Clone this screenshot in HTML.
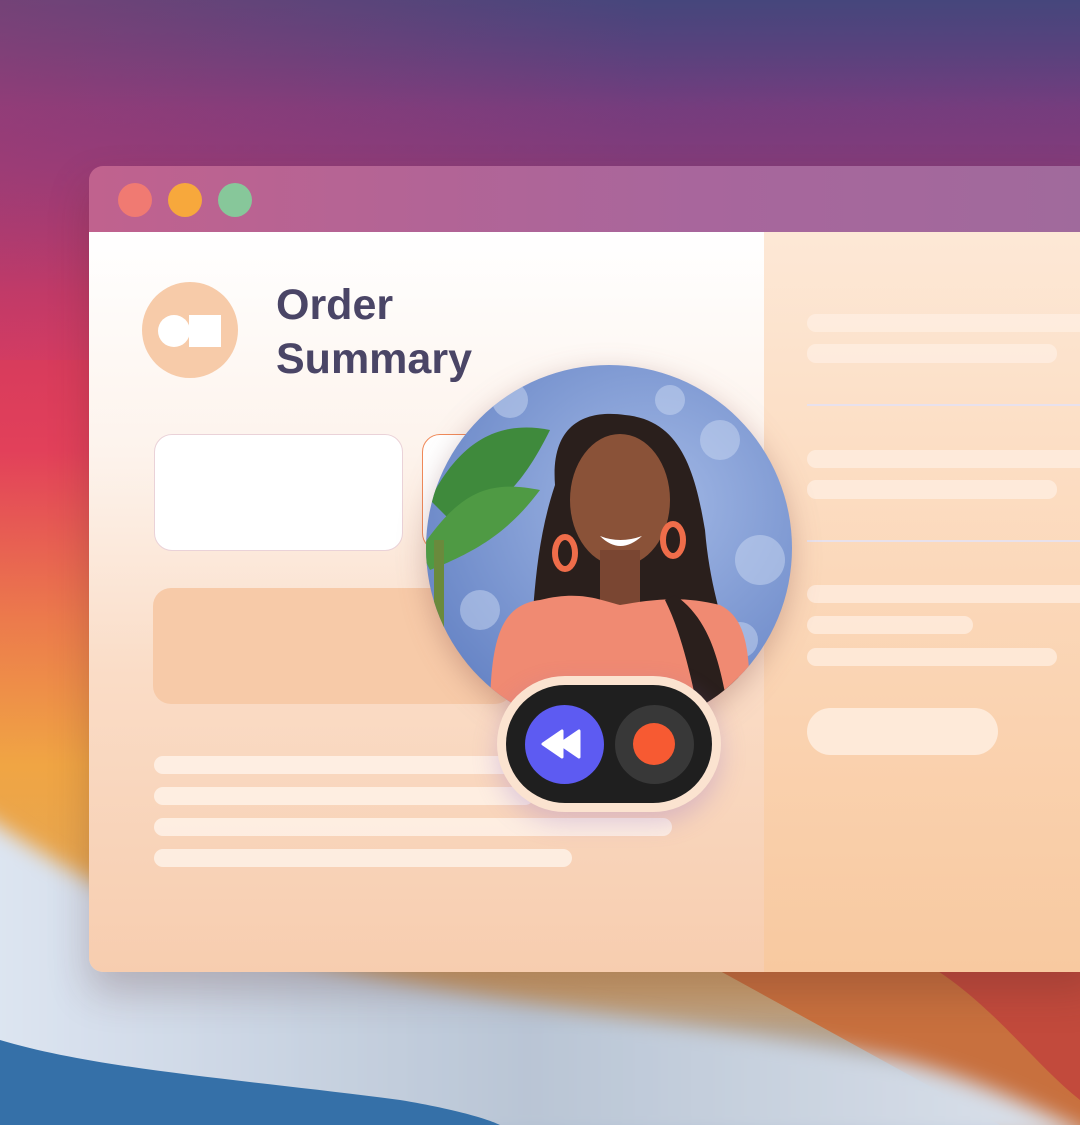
<!DOCTYPE html>
<html><head><style>
*{margin:0;padding:0;box-sizing:border-box}
body{width:1080px;height:1125px;overflow:hidden;position:relative;font-family:"Liberation Sans",sans-serif;
background:linear-gradient(180deg,#5a437e 0%,#9a3c74 14%,#d0385e 26%,#e2405a 40%,#ec7a4c 55%,#f0a544 68%,#e6a650 78%,#c9a070 88%,#8aa0c0 100%);}
.abs{position:absolute}
</style></head><body>
<div class="abs" style="left:0;top:0;width:1080px;height:360px;background:linear-gradient(180deg,rgba(70,70,124,1) 0%,rgba(110,60,128,.7) 30%,rgba(110,60,128,0) 100%)"></div>
<div class="abs" style="left:0;top:0;width:1080px;height:360px;background:linear-gradient(90deg,rgba(200,60,110,.35) 0%,rgba(0,0,0,0) 60%)"></div>
<svg class="abs" style="left:0;top:0" width="1080" height="1125">
<defs><linearGradient id="w" x1="0" y1="0" x2="1" y2="0"><stop offset="0" stop-color="#dfe7f3"/><stop offset=".5" stop-color="#b9c5d5"/><stop offset="1" stop-color="#dde3ec"/></linearGradient>
<filter id="bl" x="-10%" y="-10%" width="120%" height="130%"><feGaussianBlur stdDeviation="10"/></filter></defs>
<path d="M700 960 L1080 960 L1080 1125 L1000 1125 Z" fill="#c8703e"/>
<path d="M920 960 C990 1000 1030 1060 1080 1100 L1080 960 Z" fill="#c24a3c"/>
<path d="M-40 800 C80 880 120 900 200 930 C400 1000 700 1020 900 1060 C980 1080 1040 1110 1100 1140 L-40 1140 Z" fill="url(#w)" filter="url(#bl)"/>
<path d="M0 1040 C100 1070 250 1080 400 1100 C460 1110 490 1120 500 1125 L0 1125 Z" fill="#3570a8"/>
</svg>
<div class="abs" style="left:89px;top:166px;width:1010px;height:806px;border-radius:14px;overflow:hidden;box-shadow:0 20px 40px rgba(80,40,40,.25)">
 <div class="abs" style="left:0;top:0;width:1010px;height:66px;background:linear-gradient(90deg,#c0628e,#a8669c 60%,#a06a9c)"></div>
 <div class="abs" style="left:29px;top:17px;width:34px;height:34px;border-radius:50%;background:#f07a72"></div>
 <div class="abs" style="left:79px;top:17px;width:34px;height:34px;border-radius:50%;background:#f7a83c"></div>
 <div class="abs" style="left:129px;top:17px;width:34px;height:34px;border-radius:50%;background:#87c79a"></div>
 <div class="abs" style="left:0;top:66px;width:675px;height:740px;background:linear-gradient(180deg,#ffffff 0%,#fdf3ec 30%,#fadcc6 60%,#f7cdaf 100%)"></div>
 <div class="abs" style="left:675px;top:66px;width:335px;height:740px;background:linear-gradient(180deg,#fde8d6 0%,#fbd7b8 50%,#f8c9a0 100%)"></div>
</div>
<div class="abs" style="left:142px;top:282px;width:96px;height:96px;border-radius:50%;background:#f7cba9"></div>
<div class="abs" style="left:158px;top:315px;width:32px;height:32px;border-radius:50%;background:#fff"></div>
<div class="abs" style="left:189px;top:315px;width:32px;height:32px;background:#fff"></div>
<div class="abs" style="left:276px;top:278px;font-size:43px;line-height:54px;color:#4a4566;font-weight:bold">Order<br>Summary</div>
<div class="abs" style="left:154px;top:434px;width:249px;height:117px;border-radius:18px;background:#fff;border:1.5px solid #ead2d8"></div>
<div class="abs" style="left:422px;top:434px;width:100px;height:117px;border-radius:18px;background:#fff;border:1.5px solid #f08a5a"></div>
<div class="abs" style="left:153px;top:588px;width:360px;height:116px;border-radius:18px;background:#f7caa8"></div>
<div class="abs" style="left:154px;top:756px;width:380px;height:18px;border-radius:9px;background:rgba(255,246,238,.75)"></div>
<div class="abs" style="left:154px;top:787px;width:380px;height:18px;border-radius:9px;background:rgba(255,246,238,.75)"></div>
<div class="abs" style="left:154px;top:818px;width:518px;height:18px;border-radius:9px;background:rgba(255,246,238,.75)"></div>
<div class="abs" style="left:154px;top:849px;width:418px;height:18px;border-radius:9px;background:rgba(255,246,238,.75)"></div>
<div class="abs" style="left:807px;top:314px;width:300px;height:18px;border-radius:9px;background:rgba(255,240,228,.7)"></div>
<div class="abs" style="left:807px;top:344px;width:250px;height:19px;border-radius:9px;background:rgba(255,240,228,.7)"></div>
<div class="abs" style="left:807px;top:404px;width:273px;height:2px;background:rgba(230,225,240,.9)"></div>
<div class="abs" style="left:807px;top:450px;width:300px;height:18px;border-radius:9px;background:rgba(255,240,228,.7)"></div>
<div class="abs" style="left:807px;top:480px;width:250px;height:19px;border-radius:9px;background:rgba(255,240,228,.7)"></div>
<div class="abs" style="left:807px;top:540px;width:273px;height:2px;background:rgba(230,225,240,.9)"></div>
<div class="abs" style="left:807px;top:585px;width:300px;height:18px;border-radius:9px;background:rgba(255,240,228,.7)"></div>
<div class="abs" style="left:807px;top:616px;width:166px;height:18px;border-radius:9px;background:rgba(255,240,228,.7)"></div>
<div class="abs" style="left:807px;top:648px;width:250px;height:18px;border-radius:9px;background:rgba(255,240,228,.7)"></div>
<div class="abs" style="left:807px;top:708px;width:191px;height:47px;border-radius:24px;background:rgba(255,240,228,.8)"></div>
<svg class="abs" style="left:420px;top:360px;filter:drop-shadow(0 8px 14px rgba(120,60,60,.3))" width="380" height="360">
<defs><clipPath id="c"><circle cx="189" cy="188" r="183"/></clipPath>
<radialGradient id="bg" cx=".6" cy=".4" r=".7"><stop offset="0" stop-color="#a3b9e6"/><stop offset="1" stop-color="#6482c4"/></radialGradient></defs>
<g clip-path="url(#c)">
<rect width="380" height="360" fill="url(#bg)"/>
<g fill="#c9d8f2" opacity=".5"><circle cx="300" cy="80" r="20"/><circle cx="340" cy="200" r="25"/><circle cx="250" cy="40" r="15"/><circle cx="60" cy="250" r="20"/><circle cx="320" cy="280" r="18"/><circle cx="90" cy="40" r="18"/></g>
<path d="M10 140 C40 80 80 60 130 70 C110 110 90 140 40 170 Z" fill="#3f8a3c"/>
<path d="M0 190 C40 130 70 120 120 130 C90 170 60 190 10 210 Z" fill="#4f9a44"/>
<rect x="14" y="180" width="10" height="180" fill="#6a8a3c"/>
<path d="M135 125 C130 60 170 50 205 55 C260 60 275 110 285 170 C290 230 305 270 325 340 L105 340 C115 270 110 200 135 125 Z" fill="#2a1f1c"/>
<ellipse cx="200" cy="140" rx="50" ry="66" fill="#8a5238"/>
<rect x="180" y="190" width="40" height="60" fill="#7a4632"/>
<ellipse cx="145" cy="193" rx="10" ry="16" fill="none" stroke="#ef6d4a" stroke-width="6"/>
<ellipse cx="253" cy="180" rx="10" ry="16" fill="none" stroke="#ef6d4a" stroke-width="6"/>
<path d="M180 176 Q200 196 222 176 Q200 184 180 176Z" fill="#fff"/>
<path d="M70 360 C70 280 80 245 120 240 C160 230 180 240 200 245 C230 240 260 235 300 245 C330 260 330 300 330 360 Z" fill="#f08a72"/>
<path d="M255 235 C290 260 300 300 310 360 L280 360 C270 310 260 270 245 240 Z" fill="#2a1f1c"/>
</g>
</svg>
<div class="abs" style="left:497px;top:676px;width:224px;height:136px;border-radius:68px;background:#fbe3d0;box-shadow:0 10px 25px rgba(150,110,200,.3)"></div>
<div class="abs" style="left:506px;top:685px;width:206px;height:118px;border-radius:59px;background:#1f1f1f"></div>
<div class="abs" style="left:525px;top:705px;width:79px;height:79px;border-radius:50%;background:#5d5bf2"></div>
<svg class="abs" style="left:541px;top:728px" width="46" height="32"><path d="M2 16 L21 3 L21 29 Z M19 16 L38 3 L38 29 Z" fill="#fff" stroke="#fff" stroke-width="3" stroke-linejoin="round"/></svg>
<div class="abs" style="left:615px;top:705px;width:79px;height:79px;border-radius:50%;background:#383838"></div>
<div class="abs" style="left:633px;top:723px;width:42px;height:42px;border-radius:50%;background:#f75a32"></div>
</body></html>
